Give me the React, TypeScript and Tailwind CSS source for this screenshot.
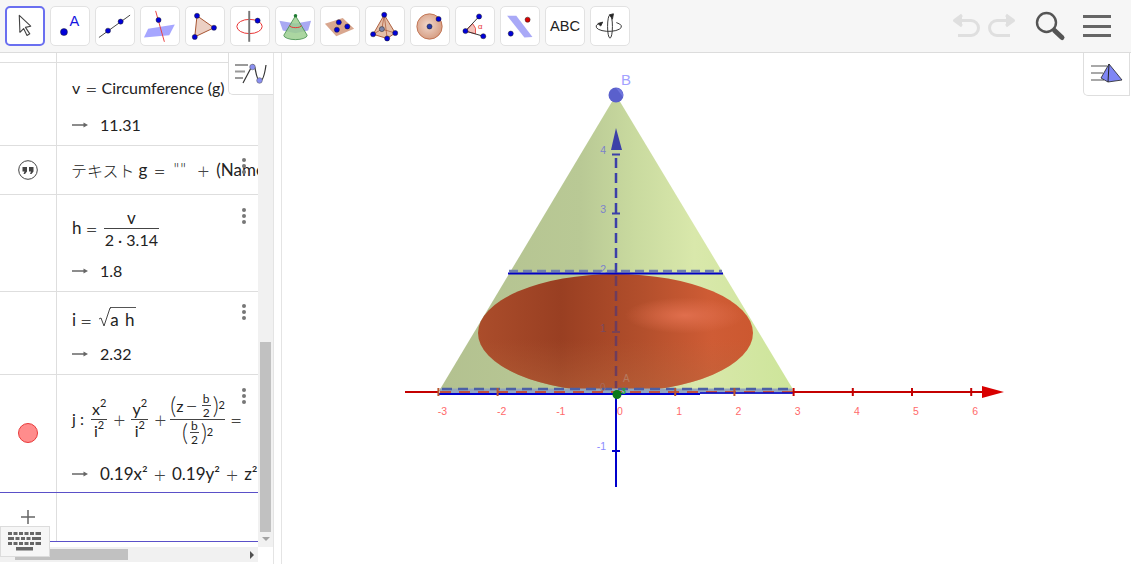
import type { ReactNode } from "react";

const BLUE = "#0000d8";

const Pt = ({ x, y, r = 2.6, fill = BLUE }: { x: number; y: number; r?: number; fill?: string }) => (
  <circle cx={x} cy={y} r={r} fill={fill} stroke="#222" strokeWidth={0.5} />
);

const toolIcons: ReactNode[] = [
  <path key="move" d="M14.3 9 26.7 20.7 21 22 25.7 29 22.7 30.7 19 23.3 15 27.3Z" fill="#fff" stroke="#444" strokeWidth={1.2} strokeLinejoin="round" />,
  <g key="point">
    <Pt x={13.3} y={25.7} r={3.6} />
    <text x={19} y={20} fontSize={15} fill="#1414e0" fontFamily="Liberation Sans, sans-serif">A</text>
  </g>,
  <g key="line">
    <path d="M3 31.3 35 8.3" stroke="#444" strokeWidth={1} />
    <Pt x={12.3} y={24.3} />
    <Pt x={25.3} y={15} />
  </g>,
  <g key="plane-line">
    <path d="M3 31.3 7.3 22.3 34.7 18 29 29Z" fill="#a6a6ff" className="blur-[0.6px]" />
    <path d="M15 4 24 35.7" stroke="#e84040" strokeWidth={1} />
    <Pt x={18} y={13.3} />
  </g>,
  <g key="polygon">
    <path d="M11.3 9 28.7 21.3 9 30.7Z" fill="#ecd0c4" stroke="#a5502d" strokeWidth={1} />
    <Pt x={11.3} y={9} />
    <Pt x={28.7} y={21.3} />
    <Pt x={9} y={30.7} />
  </g>,
  <g key="circle-axis">
    <ellipse cx={19} cy={20} rx={13} ry={7.3} fill="none" stroke="#e83030" strokeWidth={1} />
    <path d="M18.7 4V35.7" stroke="#777" strokeWidth={2} />
    <Pt x={27.3} y={14} />
  </g>,
  <g key="cone">
    <path d="M3.500 14 20 17 36 14 33 24 20 27 7 24Z" fill="#a9a9f2" className="blur-[0.6px]" />
    <path d="M20 9 8 29A12 4.500 0 0 0 32 29Z" fill="#9ccf90" fillOpacity={0.85} stroke="#3c8a45" strokeWidth={0.8} />
    <path d="M14 19A6 2.200 0 0 0 26 19" fill="none" stroke="#e83030" strokeWidth={1} />
    <circle cx={20} cy={9} r={1.8} fill="#1f7a32" />
  </g>,
  <g key="plane">
    <path d="M4 17.3 22.3 11.3 34 22.3 15.7 30Z" fill="#d9a78f" className="blur-[0.4px]" />
    <Pt x={18.3} y={15.7} />
    <Pt x={27} y={20} />
    <Pt x={16.3} y={23.3} />
  </g>,
  <g key="pyramid">
    <path d="M18.7 8 7.3 28 21.7 32.3 30 26.7Z" fill="#e4bfa9" stroke="#a5502d" strokeWidth={0.9} />
    <path d="M18.7 8 21.7 32.3M18.7 8 16.3 22.7 7.3 28M16.3 22.7 30 26.7" stroke="#a5502d" strokeWidth={0.7} fill="none" />
    <Pt x={18.7} y={8} />
    <Pt x={7.3} y={28} />
    <Pt x={21.7} y={32.3} />
    <Pt x={30} y={26.7} />
    <Pt x={16.3} y={22.7} fill="#7b84a8" />
  </g>,
  <g key="sphere">
    <circle cx={19} cy={20} r={13} fill="url(#toolSphere)" stroke="#b8623e" strokeWidth={0.8} />
    <Pt x={19} y={20} fill="#2438a8" />
    <Pt x={28.3} y={12.3} />
  </g>,
  <g key="angle">
    <path d="M9.700 24.700 17 17A11 11 0 0 1 20 27.500Z" fill="#f3c4bb" stroke="#e83030" strokeWidth={0.8} />
    <path d="M9.700 24.700 23.700 9.700M9.700 24.700 28 30" stroke="#333" strokeWidth={1} />
    <Pt x={9.7} y={24.7} />
    <Pt x={23.7} y={9.7} />
    <Pt x={28} y={30} />
    <text x={22.5} y={23} fontSize={8} fill="#e83030" fontFamily="Liberation Sans, sans-serif">α</text>
  </g>,
  <g key="parallel">
    <path d="M6.300 9 15.700 9 32.300 30.700 24 31.300Z" fill="#a9a9f7" className="blur-[0.7px]" />
    <Pt x={27.3} y={13} fill="#d80000" />
    <Pt x={10} y={27.3} />
  </g>,
  <text key="abc" x={19.5} y={25} textAnchor="middle" fontSize={15} fill="#222" fontFamily="Liberation Sans, sans-serif">ABC</text>,
  <g key="rotate" fill="none" stroke="#333" strokeWidth={1}>
    <ellipse cx={19.5} cy={20} rx={2.5} ry={12} />
    <path d="M7 17.500A13 5 0 1 0 26 16" />
    <path d="M7 17l5-1.500-2 4ZM19 8l3 4.500 1-5.500Z" fill="#222" />
  </g>,
];

const ToolButton = ({ active, children }: { active?: boolean; children: ReactNode }) => (
  <div
    className={
      active
        ? "h-[40px] w-[40px] shrink-0 rounded-[5px] border-2 border-[#6a6ff0] bg-white"
        : "h-[40px] w-[40px] shrink-0 rounded-[5px] border border-[#e2e2e2] bg-white"
    }
  >
    <svg viewBox={active ? "1 1 39 39" : "0 0 39 39"} className="h-full w-full">
      {children}
    </svg>
  </div>
);

const Toolbar = () => (
  <header className="flex h-[53px] shrink-0 items-center justify-between border-b border-[#dcdcdc] bg-[#f6f6f6] pl-[5px]">
    <svg width="0" height="0" className="absolute">
      <defs>
        <radialGradient id="toolSphere" cx="0.45" cy="0.45" r="0.6">
          <stop offset="0" stopColor="#f0d8cc" />
          <stop offset="1" stopColor="#d59a7e" />
        </radialGradient>
      </defs>
    </svg>
    <div className="flex gap-[5px]">
      {toolIcons.map((icon, i) => (
        <ToolButton key={i} active={i === 0}>
          {icon}
        </ToolButton>
      ))}
    </div>
    <div className="flex items-center pr-[20px]">
      <svg width="28" height="26" viewBox="0 0 28 26" fill="none" stroke="#dfdfdf" strokeWidth="3" className="mr-[8px]">
        <path d="M3 7.500H19A7.500 7.500 0 0 1 19 22.500H6" />
        <path d="M10 2 2.500 7.500 10 13" fill="#dfdfdf" strokeLinejoin="round" />
      </svg>
      <svg width="28" height="26" viewBox="0 0 28 26" fill="none" stroke="#dfdfdf" strokeWidth="3" className="mr-[18px]">
        <path d="M25 7.500H9A7.500 7.500 0 0 0 9 22.500H22" />
        <path d="M18 2 25.500 7.500 18 13" fill="#dfdfdf" strokeLinejoin="round" />
      </svg>
      <svg width="32" height="32" viewBox="0 0 32 32" fill="none" className="mr-[17px]">
        <circle cx="12.500" cy="12.500" r="9.500" stroke="#555" strokeWidth="2.400" />
        <path d="M20.500 20.500 28 27.500" stroke="#555" strokeWidth="5" strokeLinecap="round" />
      </svg>
      <div className="flex w-[28px] flex-col gap-[6.5px]">
        <div className="h-[3px] bg-[#666]" />
        <div className="h-[3px] bg-[#666]" />
        <div className="h-[3px] bg-[#666]" />
      </div>
    </div>
  </header>
);

const Arrow = () => (
  <svg width="16" height="8" viewBox="0 0 16 8" className="mr-[12px] shrink-0">
    <path d="M0 4H13" stroke="#666" strokeWidth="1.500" />
    <path d="M16 4 11.500 1.500V6.500Z" fill="#666" />
  </svg>
);

// relation signs are wider and thinner in the math font than in plain text
const Op = ({ children, className = "mx-[6px]" }: { children: ReactNode; className?: string }) => (
  <span className={`${className} text-[21px] font-light leading-none text-[#444]`}>{children}</span>
);

const Frac = ({ top, bottom, small }: { top: ReactNode; bottom: ReactNode; small?: boolean }) => (
  <span className={small ? "mx-[2px] inline-flex flex-col items-center text-[12px] leading-[13px]" : "mx-[1px] inline-flex flex-col items-center leading-[21px]"}>
    <span className="px-[1px]">{top}</span>
    <span className="h-[1px] w-full bg-[#444]" />
    <span className="px-[1px]">{bottom}</span>
  </span>
);

const Sup = ({ children }: { children: ReactNode }) => (
  <sup className="relative top-[-1px] align-super text-[11px] leading-none">{children}</sup>
);

const Row = ({
  height,
  marble,
  dotsTop,
  last,
  children,
}: {
  height: number;
  marble?: ReactNode;
  dotsTop?: number;
  last?: boolean;
  children?: ReactNode;
}) => (
  <div
    className={last ? "relative flex shrink-0 border-b border-[#5a50c8]" : "relative flex shrink-0 border-b border-[#dedede]"}
    style={{ height }}
  >
    <div className="flex w-[57px] shrink-0 items-center justify-center border-r border-[#dedede]">{marble}</div>
    <div className="flex min-w-0 flex-1 flex-col overflow-hidden whitespace-nowrap pl-[15px]">{children}</div>
    {dotsTop !== undefined && (
      <div className="absolute left-[242px] flex flex-col gap-[2px]" style={{ top: dotsTop }}>
        <span className="h-[4px] w-[4px] rounded-full bg-[#777]" />
        <span className="h-[4px] w-[4px] rounded-full bg-[#777]" />
        <span className="h-[4px] w-[4px] rounded-full bg-[#777]" />
      </div>
    )}
  </div>
);

const Line = ({ h, mt, children }: { h: number; mt: number; children: ReactNode }) => (
  <div className="flex shrink-0 items-center" style={{ height: h, marginTop: mt }}>
    {children}
  </div>
);

const AlgebraView = () => (
  <aside className="relative flex w-[273px] shrink-0 flex-col overflow-hidden bg-white font-['Lato',sans-serif] text-[16px] text-[#222]">
    <div className="flex min-h-0 flex-1">
      <div className="flex w-[258px] shrink-0 flex-col">
        <Row height={10} />
        <Row height={83}>
          <Line h={24} mt={13}>
            <span>v</span>
            <Op className="ml-[5px] mr-[4px]">=</Op>
            <span>Circumference</span>
            <span className="ml-[4px]">(g)</span>
          </Line>
          <Line h={24} mt={13}>
            <Arrow />
            <span>11.31</span>
          </Line>
        </Row>
        <Row
          height={49}
          dotsTop={12}
          marble={
            <svg width="20" height="20" viewBox="0 0 20 20">
              <circle cx="10" cy="10" r="9.300" fill="none" stroke="#444" strokeWidth="1" />
              <path d="M4.500 7H9V11.500L7 14H5.500L6.500 11.500H4.500ZM11 7H15.500V11.500L13.500 14H12L13 11.500H11Z" fill="#444" />
            </svg>
          }
        >
          <Line h={24} mt={12}>
            <span className="ml-[-1px] font-['Noto_Sans_CJK_JP','Lato',sans-serif] font-light">テキスト</span>
            <span className="ml-[4px] text-[17px]">g</span>
            <Op>=</Op>
            <span className="ml-[2px] text-[17px] font-light tracking-[1px]">""</span>
            <Op className="ml-[10px] mr-[7px]">+</Op>
            <span className="text-[17px]">(Name(a))</span>
          </Line>
        </Row>
        <Row height={97} dotsTop={13}>
          <Line h={46} mt={10}>
            <span className="text-[17px]">h</span>
            <Op className="ml-[4px] mr-[5px]">=</Op>
            <Frac top={<span className="text-[17px]">v</span>} bottom="2 · 3.14" />
          </Line>
          <Line h={24} mt={8}>
            <Arrow />
            <span>1.8</span>
          </Line>
        </Row>
        <Row height={83} dotsTop={12}>
          <Line h={24} mt={16}>
            <span className="text-[17px]">i</span>
            <Op className="ml-[4px] mr-[6px]">=</Op>
            <span className="relative pl-[12px]">
              <svg width="13" height="20" viewBox="0 0 13 20" className="absolute left-[0px] top-[0px]">
                <path d="M1 12 3 11 6 19 12 1H13" fill="none" stroke="#444" strokeWidth="1" />
              </svg>
              <span className="border-t border-[#555] pt-[1px] text-[17px] tracking-[1px]">a h</span>
            </span>
          </Line>
          <Line h={24} mt={10}>
            <Arrow />
            <span>2.32</span>
          </Line>
        </Row>
        <Row
          height={118}
          dotsTop={13}
          last
          marble={<span className="mb-[2px] h-[20px] w-[20px] rounded-full border border-[#e83a3a] bg-[#ff8c8c]" />}
        >
          <Line h={52} mt={18}>
            <span className="mr-[6px]">j :</span>
            <Frac top={<>x<Sup>2</Sup></>} bottom={<>i<Sup>2</Sup></>} />
            <Op className="mx-[5px]">+</Op>
            <Frac top={<>y<Sup>2</Sup></>} bottom={<>i<Sup>2</Sup></>} />
            <Op className="ml-[5px] mr-[4px]">+</Op>
            <span className="mr-[5px] inline-flex flex-col items-center">
              <span className="flex h-[26px] items-center">
                <span className="text-[23px] font-light">(</span>
                <span>z</span>
                <Op className="mx-[2px]">−</Op>
                <Frac small top="b" bottom="2" />
                <span className="text-[23px] font-light">)</span>
                <Sup>2</Sup>
              </span>
              <span className="h-[1px] w-full bg-[#444]" />
              <span className="flex h-[26px] items-center">
                <span className="text-[23px] font-light">(</span>
                <Frac small top="b" bottom="2" />
                <span className="text-[23px] font-light">)</span>
                <Sup>2</Sup>
              </span>
            </span>
            <Op className="mx-0">=</Op>
          </Line>
          <Line h={24} mt={17}>
            <Arrow />
            <span className="text-[17px]">0.19x²</span>
            <Op>+</Op>
            <span className="text-[17px]">0.19y²</span>
            <Op>+</Op>
            <span className="text-[17px]">z²</span>
          </Line>
        </Row>
        <div className="flex h-[49px] shrink-0 border-b border-[#5a50c8]">
          <div className="flex w-[57px] items-center justify-center border-r border-[#dedede] pb-[1px]">
            <svg width="14" height="14" viewBox="0 0 14 14">
              <path d="M7 0V14M0 7H14" stroke="#666" strokeWidth="1.500" />
            </svg>
          </div>
        </div>
        <div className="flex-1" />
        <div className="mb-[2px] flex h-[15px] shrink-0 items-center justify-end bg-[#f1f1f1] pl-[15px]">
          <div className="mr-auto h-[11px] w-[113px] bg-[#c1c1c1]" />
          <span className="mr-[4px] h-0 w-0 border-y-[4px] border-l-[4px] border-y-transparent border-l-[#505050]" />
        </div>
      </div>
      <div className="mb-[17px] flex w-[15px] shrink-0 flex-col items-center bg-[#f1f1f1] pt-[289px]">
        <div className="h-[190px] w-[11px] bg-[#c1c1c1]" />
        <span className="mt-[5px] h-0 w-0 border-x-[4px] border-t-[4px] border-x-transparent border-t-[#a3a3a3]" />
      </div>
    </div>
    <div className="absolute right-0 top-0 flex h-[42px] w-[45px] items-center justify-center rounded-bl-[5px] border-b border-l border-[#dedede] bg-white">
      <svg width="34" height="24" viewBox="0 0 34 24" fill="none">
        <path d="M1 3H14M1 9.500H11M1 16H9" stroke="#9a9a9a" strokeWidth="2" />
        <path d="M9 21 18 4C19 2 20 3 21 6 22 11 23 19 26 19 29 19 31 10 32 3" stroke="#333" strokeWidth="1.200" />
        <circle cx="18.500" cy="5" r="2.800" fill="#8a8ff0" stroke="#555" strokeWidth="0.500" />
        <circle cx="25.500" cy="18.500" r="2.800" fill="#8a8ff0" stroke="#555" strokeWidth="0.500" />
      </svg>
    </div>
    <div className="absolute bottom-[7px] left-0 flex h-[31px] w-[50px] items-center justify-center border border-[#dcdcdc] bg-[#f6f6f6]">
      <svg width="34" height="19" viewBox="0 0 34 19" fill="#666">
        <path d="M0 0H4V3H0ZM5.500 0H9.500V3H5.500ZM11 0H15V3H11ZM16.500 0H20.500V3H16.500ZM22 0H26V3H22ZM27.500 0H33V3H27.500Z" />
        <path d="M0 5H6V8H0ZM7.500 5H11.500V8H7.500ZM13 5H17V8H13ZM18.500 5H22.500V8H18.500ZM24 5H33V8H24Z" />
        <path d="M0 10H4V13H0ZM5.500 10H9.500V13H5.500ZM11 10H15V13H11ZM16.500 10H20.500V13H16.500ZM22 10H26V13H22ZM27.500 10H33V13H27.500Z" />
        <path d="M8 15H25V18.500H8Z" />
      </svg>
    </div>
  </aside>
);

const xTicks = [-3, -2, -1, 0, 1, 2, 3, 4, 5, 6];
const tickX = (n: number) => 616 + n * 59.2;
const zTicks = [4, 3, 2, 1, -1];
const tickY = (n: number) => 391.5 - n * 59.4;

const Graphics = () => (
  <main className="relative min-w-0 flex-1 overflow-hidden bg-white">
    <svg viewBox="282 53 849 511" className="block h-full w-full" fontFamily="Liberation Sans, sans-serif">
      <defs>
        <linearGradient id="coneFill" x1="439" x2="794" y1="0" y2="0" gradientUnits="userSpaceOnUse">
          <stop offset="0" stopColor="#b3c190" />
          <stop offset="0.4" stopColor="#b9c995" />
          <stop offset="0.55" stopColor="#c9da9f" />
          <stop offset="0.72" stopColor="#d9e8ab" />
          <stop offset="1" stopColor="#cde59a" />
        </linearGradient>
        <linearGradient id="sphereFill" x1="478" x2="753" y1="0" y2="0" gradientUnits="userSpaceOnUse">
          <stop offset="0" stopColor="#ab4d2b" />
          <stop offset="0.3" stopColor="#993f22" />
          <stop offset="0.6" stopColor="#b34f2c" />
          <stop offset="0.85" stopColor="#cf5c35" />
          <stop offset="1" stopColor="#cc5830" />
        </linearGradient>
        <radialGradient id="sphereGlow" cx="685" cy="318" r="60" gradientUnits="userSpaceOnUse" gradientTransform="translate(0 220) scale(1 0.3)">
          <stop offset="0" stopColor="#e37150" stopOpacity="0.9" />
          <stop offset="1" stopColor="#e37150" stopOpacity="0" />
        </radialGradient>
        <linearGradient id="sphereShade" x1="0" x2="0" y1="275" y2="392" gradientUnits="userSpaceOnUse">
          <stop offset="0.55" stopColor="#b8683e" stopOpacity="0" />
          <stop offset="1" stopColor="#b8683e" stopOpacity="0.5" />
        </linearGradient>
      </defs>

      <path d="M616 95 439 391H794Z" fill="url(#coneFill)" />
      <ellipse cx="615.500" cy="333" rx="137.500" ry="59" fill="url(#sphereFill)" />
      <ellipse cx="615.500" cy="333" rx="137.500" ry="59" fill="url(#sphereShade)" />
      <ellipse cx="615.500" cy="333" rx="137.500" ry="59" fill="url(#sphereGlow)" />

      {/* top circle */}
      <path d="M509 271H722" stroke="#6f7fae" strokeWidth="2.500" strokeDasharray="9 5" />
      <path d="M508 273.500H723" stroke="#0000c4" strokeWidth="2" />

      {/* base circle */}
      <path d="M440 388.500H792V394H440Z" fill="#94a6bc" />
      <path d="M442 389H790" stroke="#4b5fa6" strokeWidth="2.500" strokeDasharray="10 6" />
      <path d="M440 392H794" stroke="#c0523c" strokeWidth="2" strokeDasharray="11 8" />
      <path d="M438 394H700" stroke="#0000d0" strokeWidth="2" />
      <path d="M700 393H794" stroke="#0000d0" strokeWidth="1.500" />

      {/* x axis */}
      <path d="M405 392H438M794 392H984" stroke="#c40000" strokeWidth="2" />
      <path d="M982 386 1004 392 982 398Z" fill="#d80000" />
      {xTicks.map((n) => (
        <g key={n}>
          {n !== 0 && n !== -1 && (
            <path d={`M${tickX(n)} 388V396`} stroke={n < 3 ? "#b8552f" : "#c40000"} strokeWidth="2" />
          )}
          <text x={tickX(n) + 4} y={415} textAnchor="middle" fontSize="10.500" fill="#ff6a6a">
            {n}
          </text>
        </g>
      ))}

      {/* z axis */}
      <path d="M616 158V273" stroke="#3c40a8" strokeWidth="2.500" strokeDasharray="10 5" />
      <path d="M616 276V388" stroke="#6e3c5c" strokeWidth="2.500" strokeDasharray="10 5" />
      <path d="M616 392V487" stroke="#0000cc" strokeWidth="2" />
      <path d="M616 128 611 150H622Z" fill="#3c40a8" />
      <path d="M612 154.500H620M612 213.500H620" stroke="#3c40a8" strokeWidth="2" />
      <path d="M612 332H620" stroke="#7a4254" strokeWidth="2" />
      <path d="M612 451H620" stroke="#0000cc" strokeWidth="2" />
      {zTicks.map((n) => (
        <text
          key={n}
          x={606}
          y={tickY(n) - (n < 0 ? 1 : 0)}
          textAnchor="end"
          fontSize="10.500"
          fill={n === 1 ? "#7a4a62" : n < 0 ? "#8a8aff" : "#7c82cc"}
        >
          {n}
        </text>
      ))}
      <text x="600" y="391" fontSize="10" fill="#a86a5a">0</text>

      {/* points */}
      <circle cx="616" cy="95" r="7.500" fill="#5a60cc" />
      <path d="M616 88A7.500 7.500 0 0 1 623 97Z" fill="#6f75de" />
      <text x="621" y="85" fontSize="15" fill="#a2a2ff">B</text>
      <text x="623" y="382" fontSize="10" fill="#b57a60">A</text>
      <circle cx="617" cy="394.500" r="4.500" fill="#0a7a1a" />
      <text x="621" y="394" fontSize="9" fontWeight="bold" fill="#22a838">3</text>
    </svg>
    <div className="absolute right-[1px] top-0 flex h-[43px] w-[47px] items-center justify-center rounded-bl-[5px] border-x border-b border-[#dedede] bg-white">
      <svg width="32" height="22" viewBox="0 0 32 22" fill="none">
        <path d="M0 3H16M0 10H12M0 17H13" stroke="#a8a8a8" strokeWidth="2" />
        <path d="M18 1 10 15 17 19 31 17Z" fill="#7f86f4" stroke="#222" strokeWidth="0.800" />
        <path d="M18 1 17 19" stroke="#222" strokeWidth="1" />
      </svg>
    </div>
  </main>
);

export default function App() {
  return (
    <div className="flex h-[564px] w-[1131px] flex-col overflow-hidden bg-white">
      <Toolbar />
      <div className="flex min-h-0 flex-1">
        <AlgebraView />
        <div className="w-[9px] shrink-0 border-x border-[#e4e4e4] bg-white" />
        <Graphics />
      </div>
    </div>
  );
}
